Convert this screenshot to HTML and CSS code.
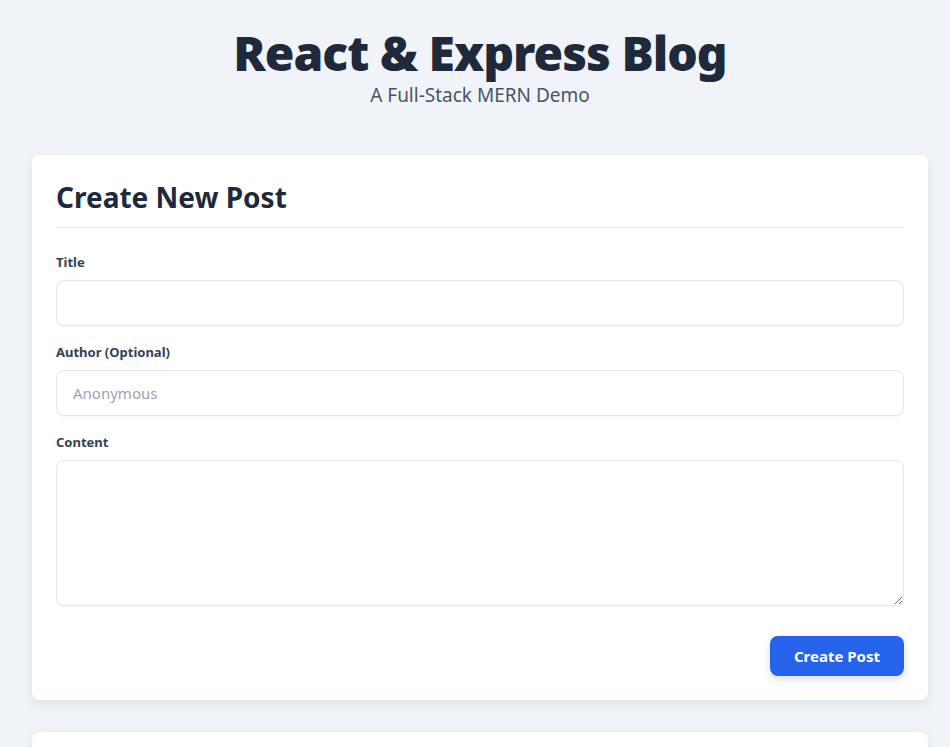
FILE: index.html
```html
<!DOCTYPE html>
<html lang="en">
<head>
<meta charset="utf-8">
<title>React & Express Blog</title>
<link rel="stylesheet" href="styles.css">
</head>
<body>
<div class="app">
  <header class="header">
    <h1 class="title">React &amp; Express Blog</h1>
    <p class="subtitle">A Full-Stack MERN Demo</p>
  </header>
  <main class="main">
    <section class="card">
      <h2 class="card-title">Create New Post</h2>
      <form class="form">
        <div class="field">
          <label class="label" for="title">Title</label>
          <input class="input" id="title" type="text">
        </div>
        <div class="field">
          <label class="label" for="author">Author (Optional)</label>
          <input class="input" id="author" type="text" placeholder="Anonymous">
        </div>
        <div class="field">
          <label class="label" for="content">Content</label>
          <textarea class="input textarea" id="content"></textarea>
        </div>
        <div class="actions">
          <button class="btn" type="button">Create Post</button>
        </div>
      </form>
    </section>
    <section class="card card-list">
      <h2 class="card-title">All Posts</h2>
    </section>
  </main>
</div>
</body>
</html>
```
FILE: styles.css
```css
* { box-sizing: border-box; }
html, body { margin: 0; padding: 0; }
body {
  background: #f0f4f8;
  font-family: "Noto Sans", "Open Sans", sans-serif;
  color: #1e293b;
}
.app {
  width: 960px;
  padding: 0 32px;
}
.header {
  text-align: center;
  padding-top: 24px;
  margin-bottom: 47px;
}
.title {
  margin: 0;
  font-size: 48px;
  font-weight: 900;
  line-height: 58px;
  color: #1e293b;
  letter-spacing: -1px;
}
.subtitle {
  margin: 0;
  font-size: 19px;
  line-height: 26px;
  color: #475569;
}
.main {
  display: flex;
  flex-direction: column;
  gap: 32px;
}
.card {
  background: #fff;
  border-radius: 8px;
  padding: 24px;
  box-shadow: 0 4px 12px rgba(0, 0, 0, 0.08);
}
.card-title {
  margin: 0 0 25px;
  padding-bottom: 12px;
  border-bottom: 1px solid #e5e7eb;
  font-size: 28px;
  font-weight: 700;
  line-height: 36px;
  color: #1e293b;
}
.form {
  display: flex;
  flex-direction: column;
  gap: 17px;
}
.field {
  display: flex;
  flex-direction: column;
  gap: 9px;
}
.label {
  font-size: 13px;
  font-weight: 700;
  line-height: 18px;
  color: #334155;
}
.input {
  width: 100%;
  height: 46px;
  padding: 0 16px;
  border: 1px solid #e2e8f0;
  border-radius: 8px;
  font-family: inherit;
  font-size: 15px;
  color: #1e293b;
  background: #fff;
  box-shadow: 0 1px 2px rgba(0,0,0,0.04);
}
.input::placeholder { color: #9ca3af; }
.textarea {
  height: 146px;
  padding: 12px 16px;
  resize: vertical;
}
.actions {
  display: flex;
  justify-content: flex-end;
  padding-top: 13px;
}
.btn {
  width: 134px;
  height: 40px;
  border: none;
  border-radius: 8px;
  background: #2563eb;
  color: #fff;
  font-family: inherit;
  font-size: 15px;
  font-weight: 700;
  box-shadow: 0 3px 8px rgba(0, 0, 0, 0.15);
}
.card-list { min-height: 200px; }
```
